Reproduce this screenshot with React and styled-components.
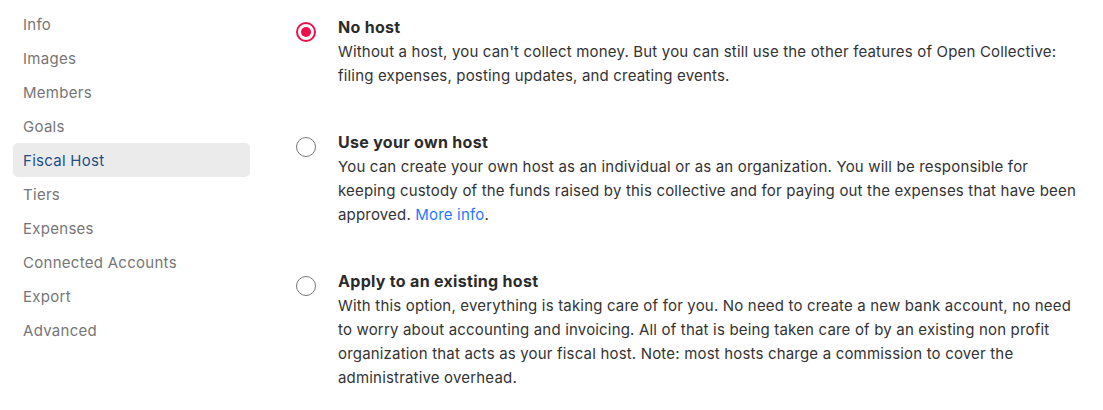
import React from "react";
import styled, { createGlobalStyle } from "styled-components";

const Global = createGlobalStyle`
  html, body { margin: 0; padding: 0; background: #fff; }
  body { font-family: Inter, "Noto Sans", sans-serif; -webkit-font-smoothing: antialiased; }
`;

const Page = styled.div`
  display: flex;
  align-items: flex-start;
  width: 1103px;
`;

const Sidebar = styled.nav`
  display: flex;
  flex-direction: column;
  width: 237px;
  padding: 7px 0 0 13px;
  flex-shrink: 0;
`;

const NavItem = styled.a`
  display: flex;
  align-items: center;
  height: 34px;
  padding-left: 10px;
  border-radius: 5px;
  font-size: 15px;
  letter-spacing: 0.28px;
  color: ${(p) => (p.$active ? "#1e4f85" : "#767676")};
  background: ${(p) => (p.$active ? "#ebebeb" : "transparent")};
  text-decoration: none;
`;

const Main = styled.div`
  flex: 1;
  display: flex;
  flex-direction: column;
  gap: 42px;
  padding: 15px 15px 0 46px;
`;

const Option = styled.label`
  display: flex;
  gap: 22px;
  align-items: flex-start;
`;

const Radio = styled.span`
  box-sizing: border-box;
  width: 20px;
  height: 20px;
  margin-top: 7px;
  flex-shrink: 0;
  border-radius: 50%;
  border: ${(p) => (p.$checked ? "2px solid #ec0f4a" : "1.5px solid #777")};
  display: flex;
  align-items: center;
  justify-content: center;
  &::after {
    content: "";
    display: ${(p) => (p.$checked ? "block" : "none")};
    width: 10px;
    height: 10px;
    border-radius: 50%;
    background: #ec0f4a;
  }
`;

const Body = styled.div`
  flex: 1;
  display: flex;
  flex-direction: column;
  gap: 1px;
`;

const Title = styled.div`
  font-size: 16px;
  font-weight: 700;
  letter-spacing: 0.3px;
  line-height: 24px;
  color: #2b2b2b;
`;

const Desc = styled.div`
  font-size: 15px;
  letter-spacing: 0.18px;
  line-height: 24px;
  color: #333;
`;

const Link = styled.a`
  color: #1f7aff;
  text-decoration: none;
`;

const nav = [
  "Info",
  "Images",
  "Members",
  "Goals",
  "Fiscal Host",
  "Tiers",
  "Expenses",
  "Connected Accounts",
  "Export",
  "Advanced",
];

export default function App() {
  return (
    <>
      <Global />
      <Page>
        <Sidebar>
          {nav.map((n) => (
            <NavItem key={n} $active={n === "Fiscal Host"}>
              {n}
            </NavItem>
          ))}
        </Sidebar>
        <Main>
          <Option>
            <Radio $checked />
            <Body>
              <Title>No host</Title>
              <Desc>
                Without a host, you can't collect money. But you can still use the other features of Open
                Collective: filing expenses, posting updates, and creating events.
              </Desc>
            </Body>
          </Option>
          <Option>
            <Radio />
            <Body>
              <Title>Use your own host</Title>
              <Desc>
                You can create your own host as an individual or as an organization. You will be responsible for
                keeping custody of the funds raised by this collective and for paying out the expenses that have
                been approved. <Link>More info</Link>.
              </Desc>
            </Body>
          </Option>
          <Option>
            <Radio />
            <Body>
              <Title>Apply to an existing host</Title>
              <Desc>
                With this option, everything is taking care of for you. No need to create a new bank account, no
                need to worry about accounting and invoicing. All of that is being taken care of by an existing
                non profit organization that acts as your fiscal host. Note: most hosts charge a commission to
                cover the administrative overhead.
              </Desc>
            </Body>
          </Option>
        </Main>
      </Page>
    </>
  );
}
